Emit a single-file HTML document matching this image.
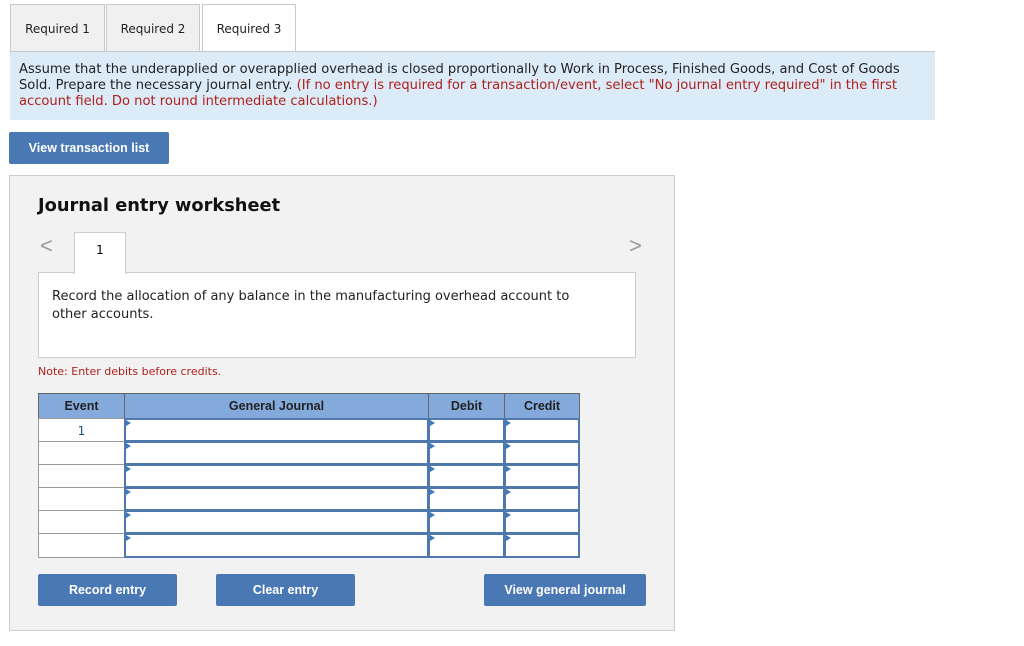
<!DOCTYPE html><html><head><style>
body{margin:0;width:1024px;height:646px;background:#fff;font-family:"DejaVu Sans","Liberation Sans",sans-serif;position:relative;overflow:hidden}
.a{position:absolute;box-sizing:border-box}
.tab{top:4px;height:48px;border:1px solid #c8c8c8;border-bottom:none;background:#f0f0f0;font-size:12px;color:#222;text-align:center;line-height:48px}
.btn{background:#4a78b4;color:#fff;font-family:"Liberation Sans",sans-serif;font-weight:bold;font-size:12.5px;text-align:center;line-height:32px;border-radius:2px}
.red{color:#b0201c}
.c{border:1px solid #999;background:#fff}
.in{border:2px solid #4f79ad;background:#fff}
.in:before{content:"";position:absolute;left:0;top:0;border-left:5px solid #3d77c0;border-top:3px solid transparent;border-bottom:3px solid transparent}
.h{background:#84aadc;border:1px solid #666;font-family:"Liberation Sans",sans-serif;font-weight:bold;font-size:12.5px;color:#222;text-align:center;line-height:24px}
</style></head><body>
<div class="a tab" style="left:10px;width:95px">Required 1</div>
<div class="a tab" style="left:106px;width:94px">Required 2</div>
<div class="a tab" style="left:202px;width:94px;background:#fff;height:49px">Required 3</div>
<div class="a" style="left:10px;top:51px;width:925px;height:1px;background:#c8c8c8"></div>
<div class="a" style="left:10px;top:52px;width:925px;height:68px;background:#dcebf8;padding:10px 9px;font-size:13.1px;line-height:16px;color:#222">Assume that the underapplied or overapplied overhead is closed proportionally to Work in Process, Finished Goods, and Cost of Goods Sold. Prepare the necessary journal entry. <span class="red">(If no entry is required for a transaction/event, select "No journal entry required" in the first account field. Do not round intermediate calculations.)</span></div>
<div class="a btn" style="left:9px;top:132px;width:160px;height:32px">View transaction list</div>
<div class="a" style="left:9px;top:175px;width:666px;height:456px;background:#f2f2f2;border:1px solid #ccc"></div>
<div class="a" style="left:38px;top:195px;font-size:17.8px;font-weight:bold;color:#111">Journal entry worksheet</div>
<div class="a" style="left:40px;top:233px;font-size:22px;color:#999;font-family:'Liberation Sans'">&lt;</div>
<div class="a" style="left:629px;top:233px;font-size:22px;color:#999;font-family:'Liberation Sans'">&gt;</div>
<div class="a" style="left:38px;top:272px;width:598px;height:86px;background:#fff;border:1px solid #ccc;padding:15px 13px;font-size:13px;line-height:18px;color:#222"><div style="width:540px">Record the allocation of any balance in the manufacturing overhead account to other accounts.</div></div>
<div class="a" style="left:74px;top:232px;width:52px;height:42px;background:#fff;border:1px solid #ccc;border-bottom:none;text-align:center;line-height:34px;font-size:12px">1</div>
<div class="a red" style="left:38px;top:365px;font-size:11px">Note: Enter debits before credits.</div>
<div class="a h" style="left:38px;top:393px;width:87px;height:26px">Event</div>
<div class="a h" style="left:124px;top:393px;width:305px;height:26px">General Journal</div>
<div class="a h" style="left:428px;top:393px;width:77px;height:26px">Debit</div>
<div class="a h" style="left:504px;top:393px;width:76px;height:26px">Credit</div>
<div class="a" style="left:38px;top:418px;width:542px;height:140px;border:1px solid #888;background:#fff"></div>
<div class="a c" style="left:38px;top:418px;width:87px;height:24px;text-align:center;font-size:12px;line-height:24px;color:#1b4f8a">1</div>
<div class="a c" style="left:38px;top:441px;width:87px;height:24px"></div>
<div class="a c" style="left:38px;top:464px;width:87px;height:24px"></div>
<div class="a c" style="left:38px;top:487px;width:87px;height:24px"></div>
<div class="a c" style="left:38px;top:510px;width:87px;height:24px"></div>
<div class="a c" style="left:38px;top:533px;width:87px;height:25px"></div>
<div class="a in" style="left:124px;top:418px;width:305px;height:24px"></div><div class="a in" style="left:428px;top:418px;width:77px;height:24px"></div><div class="a in" style="left:504px;top:418px;width:76px;height:24px"></div>
<div class="a in" style="left:124px;top:441px;width:305px;height:24px"></div><div class="a in" style="left:428px;top:441px;width:77px;height:24px"></div><div class="a in" style="left:504px;top:441px;width:76px;height:24px"></div>
<div class="a in" style="left:124px;top:464px;width:305px;height:24px"></div><div class="a in" style="left:428px;top:464px;width:77px;height:24px"></div><div class="a in" style="left:504px;top:464px;width:76px;height:24px"></div>
<div class="a in" style="left:124px;top:487px;width:305px;height:24px"></div><div class="a in" style="left:428px;top:487px;width:77px;height:24px"></div><div class="a in" style="left:504px;top:487px;width:76px;height:24px"></div>
<div class="a in" style="left:124px;top:510px;width:305px;height:24px"></div><div class="a in" style="left:428px;top:510px;width:77px;height:24px"></div><div class="a in" style="left:504px;top:510px;width:76px;height:24px"></div>
<div class="a in" style="left:124px;top:533px;width:305px;height:25px"></div><div class="a in" style="left:428px;top:533px;width:77px;height:25px"></div><div class="a in" style="left:504px;top:533px;width:76px;height:25px"></div>
<div class="a btn" style="left:38px;top:574px;width:139px;height:32px">Record entry</div>
<div class="a btn" style="left:216px;top:574px;width:139px;height:32px">Clear entry</div>
<div class="a btn" style="left:484px;top:574px;width:162px;height:32px">View general journal</div>
</body></html>
